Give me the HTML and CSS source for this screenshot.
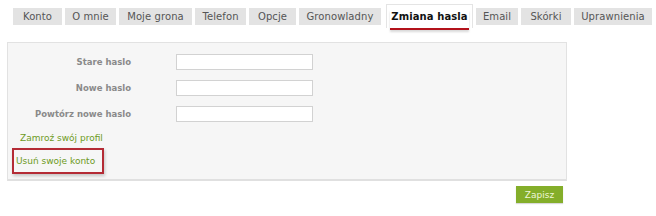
FILE: index.html
```html
<!DOCTYPE html>
<html lang="pl">
<head>
  <meta charset="UTF-8">
  <title>Zmiana hasła</title>
  <link rel="stylesheet" href="styles.css">
</head>
<body>
  <div class="page">
    <ul class="tabs">
      <li class="tab w-konto">Konto</li>
      <li class="tab w-omnie">O mnie</li>
      <li class="tab w-grona">Moje grona</li>
      <li class="tab w-telefon">Telefon</li>
      <li class="tab w-opcje">Opcje</li>
      <li class="tab w-grono">Gronowladny</li>
      <li class="tab active w-zmiana"><span>Zmiana hasla</span></li>
      <li class="tab w-email">Email</li>
      <li class="tab w-skorki">Skórki</li>
      <li class="tab w-upr">Uprawnienia</li>
    </ul>

    <div class="panel">
      <div class="form-row">
        <label class="label">Stare haslo</label>
        <input class="field" type="password">
      </div>
      <div class="form-row">
        <label class="label">Nowe haslo</label>
        <input class="field" type="password">
      </div>
      <div class="form-row">
        <label class="label">Powtórz nowe haslo</label>
        <input class="field" type="password">
      </div>

      <div class="links">
        <a href="#" class="link">Zamroź swój profil</a>
        <a href="#" class="link boxed">Usuń swoje konto</a>
      </div>
    </div>

    <div class="actions">
      <button class="save">Zapisz</button>
    </div>
  </div>
</body>
</html>
```

FILE: styles.css
```css
body {
  margin: 0;
  background: #fff;
  font-family: "DejaVu Sans", Verdana, sans-serif;
  font-size: 10px;
}

.page {
  width: 656px;
  height: 216px;
  overflow: hidden;
}

.tabs {
  list-style: none;
  margin: 0;
  padding: 4px 0 0 13px;
  display: flex;
  align-items: flex-start;
  gap: 3px;
  height: 31px;
  box-sizing: border-box;
}

.tab {
  margin-top: 4px;
  height: 17px;
  line-height: 17px;
  background: #e3e3e3;
  color: #555;
  text-align: center;
  letter-spacing: 0.1px;
}

.w-konto { width: 49px; }
.w-omnie { width: 51px; }
.w-grona { width: 73px; }
.w-telefon { width: 51px; }
.w-opcje { width: 47px; }
.w-grono { width: 82px; }
.w-zmiana { width: 85px; }
.w-email { width: 42px; }
.w-skorki { width: 50px; }
.w-upr { width: 78px; }

.tab.active {
  margin-top: 0;
  margin-left: 2px;
  height: 23px;
  line-height: 22px;
  background: #fff;
  border: 1px solid #e4e4e4;
  border-bottom: none;
  color: #111;
  font-weight: bold;
}

.tab.active span {
  display: inline-block;
  line-height: 14px;
  border-bottom: 2px solid #b3121b;
  padding: 0 1px 4px;
  margin-top: 5px;
  box-shadow: 0 2px 2px rgba(0, 0, 0, 0.15);
}

.panel {
  margin: 11px 0 0 7px;
  width: 560px;
  height: 139px;
  box-sizing: border-box;
  background: #f6f6f6;
  border: 1px solid #e2e2e2;
  border-bottom: 2px solid #e0e0e0;
  padding: 11px 0 0 0;
}

.form-row {
  display: flex;
  align-items: center;
  height: 16px;
  margin-bottom: 10px;
}

.label {
  width: 123px;
  text-align: right;
  color: #8a8a8a;
  font-weight: bold;
  font-size: 8.5px;
}

.field {
  margin-left: 45px;
  width: 137px;
  height: 16px;
  box-sizing: border-box;
  border: 1px solid #d2d2d2;
  background: #fff;
  padding: 0;
}

.links {
  display: flex;
  flex-direction: column;
  align-items: flex-start;
  padding: 0 0 0 4px;
  margin-top: -1px;
  gap: 3px;
}

.link {
  color: #6d9a1c;
  text-decoration: none;
  font-size: 9px;
  padding: 0 8px;
  line-height: 14px;
}

.boxed {
  padding: 4px 7px 4px 2px;
  border: 2px solid #b42b35;
  box-shadow: 1px 2px 3px rgba(0, 0, 0, 0.2);
}

.actions {
  width: 563px;
  display: flex;
  justify-content: flex-end;
  padding-top: 5px;
}

.save {
  width: 47px;
  height: 17px;
  border: none;
  background: #84ae2a;
  color: #eef6d8;
  font-family: inherit;
  font-size: 9px;
  padding: 0;
  box-shadow: 0 1px 1px rgba(0, 0, 0, 0.15);
}
```
